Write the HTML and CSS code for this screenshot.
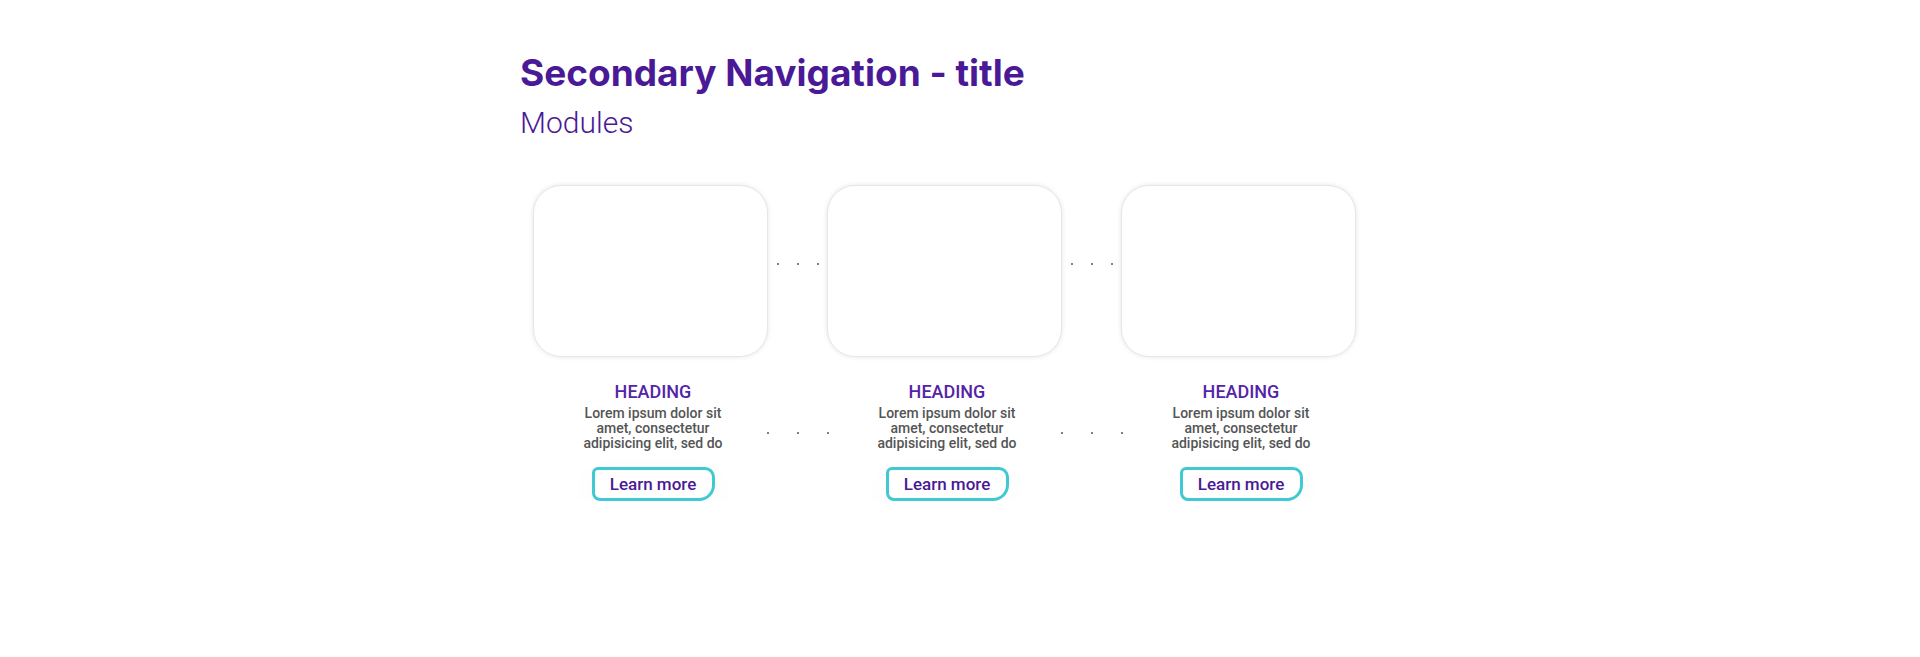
FILE: index.html
```html
<!DOCTYPE html>
<html lang="en">
<head>
    <meta charset="UTF-8">
    <meta name="viewport" content="width=device-width, initial-scale=1.0">
    <title>Secondary Navigation</title>
    <link rel="stylesheet" href="styles.css">
</head>
<body>

    <div class="page">
        <h1 class="title">Secondary Navigation - title</h1>
        <h2 class="subtitle">Modules</h2>

        <div class="modules">
            <div class="module">
                <div class="card"></div>
                <div class="info">
                    <h3>HEADING</h3>
                    <p>Lorem ipsum dolor sit<br>amet, consectetur<br>adipisicing elit, sed do</p>
                    <button class="learn-btn">Learn more</button>
                </div>
            </div>

            <div class="sep">
                <div class="dots dots-top"><span></span><span></span><span></span></div>
                <div class="dots dots-bottom"><span></span><span></span><span></span></div>
            </div>

            <div class="module">
                <div class="card"></div>
                <div class="info">
                    <h3>HEADING</h3>
                    <p>Lorem ipsum dolor sit<br>amet, consectetur<br>adipisicing elit, sed do</p>
                    <button class="learn-btn">Learn more</button>
                </div>
            </div>

            <div class="sep">
                <div class="dots dots-top"><span></span><span></span><span></span></div>
                <div class="dots dots-bottom"><span></span><span></span><span></span></div>
            </div>

            <div class="module">
                <div class="card"></div>
                <div class="info">
                    <h3>HEADING</h3>
                    <p>Lorem ipsum dolor sit<br>amet, consectetur<br>adipisicing elit, sed do</p>
                    <button class="learn-btn">Learn more</button>
                </div>
            </div>
        </div>
    </div>

</body>
</html>
```

FILE: styles.css
```css
body {
    font-family: Roboto, "Liberation Sans", sans-serif;
    margin: 0;
    padding: 0;
    background-color: white;
}
.page {
    padding: 51px 0 0 520px;
}
.title {
    margin: 0;
    font-family: Inter, Roboto, sans-serif;
    font-size: 37px;
    line-height: 44px;
    font-weight: 700;
    color: #4a1996;
}
.subtitle {
    margin: 10px 0 0 0;
    font-size: 30px;
    line-height: 36px;
    font-weight: 300;
    color: #4a1996;
}
.modules {
    display: flex;
    margin: 44px 0 0 13px;
}
.module {
    width: 235px;
    display: flex;
    flex-direction: column;
    align-items: center;
}
.card {
    width: 235px;
    height: 172px;
    box-sizing: border-box;
    border: 1px solid #e6e6e6;
    border-radius: 28px;
    box-shadow: 0 0 5px rgba(0, 0, 0, 0.1);
    background: white;
}
.info {
    margin-top: 25px;
    padding-left: 5px;
    text-align: center;
    display: flex;
    flex-direction: column;
    align-items: center;
}
.info h3 {
    margin: 0;
    font-size: 18px;
    line-height: 20px;
    font-weight: 500;
    color: #5424a8;
}
.info p {
    margin: 4px 0 0 0;
    font-size: 14px;
    line-height: 15px;
    font-weight: 500;
    color: #555;
}
.learn-btn {
    margin-top: 16px;
    width: 123px;
    height: 34px;
    box-sizing: border-box;
    border: 3px solid #40c9d2;
    border-radius: 6px 10px 16px 8px;
    background: white;
    font-family: inherit;
    font-size: 17px;
    font-weight: 500;
    color: #4a1996;
    box-shadow: 0 8px 30px rgba(0, 0, 0, 0.03);
    cursor: pointer;
}
.sep {
    width: 59px;
    display: flex;
    flex-direction: column;
    align-items: center;
}
.dots {
    display: flex;
}
.dots span {
    width: 2px;
    height: 2px;
    border-radius: 50%;
    background: #555;
}
.dots-top {
    margin-top: 78px;
    gap: 18px;
}
.dots-bottom {
    margin-top: 167px;
    gap: 28px;
}
```
